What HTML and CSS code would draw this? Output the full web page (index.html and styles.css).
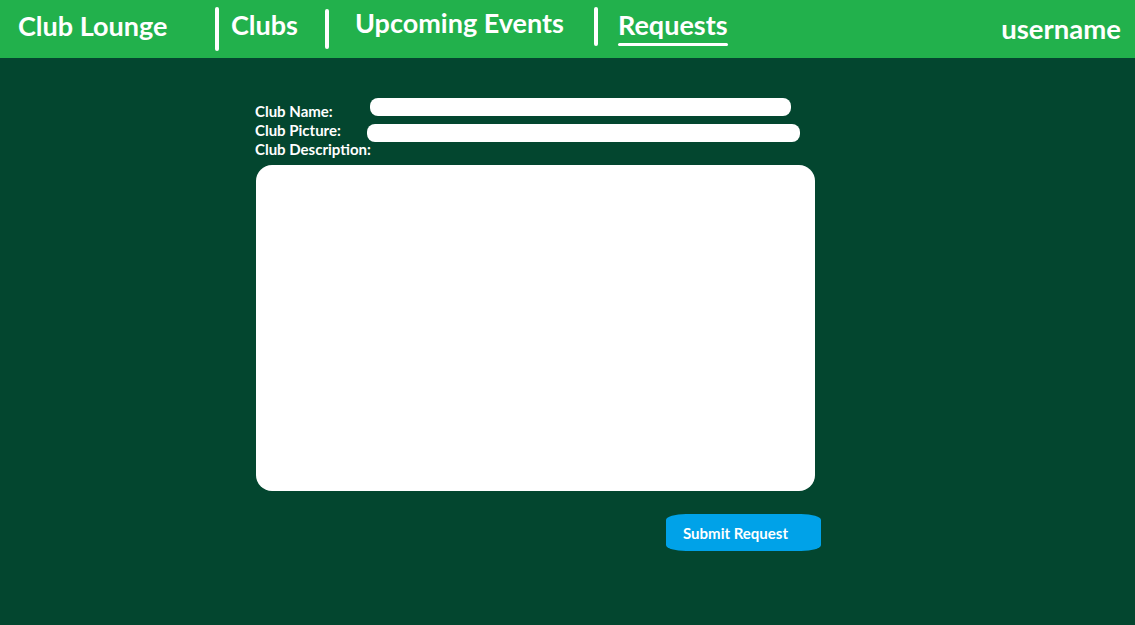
FILE: index.html
```html
<!DOCTYPE html>
<html lang="en">
<head>
<meta charset="utf-8">
<title>Club Lounge - Requests</title>
<link rel="stylesheet" href="styles.css">
</head>
<body>
<header class="nav">
  <div class="brand">Club Lounge</div>
  <span class="sep sep-1"></span>
  <a class="nav-link link-clubs">Clubs</a>
  <span class="sep sep-2"></span>
  <a class="nav-link link-events">Upcoming Events</a>
  <span class="sep sep-3"></span>
  <a class="nav-link link-requests active">Requests</a>
  <div class="user">username</div>
</header>
<main class="main">
  <form class="form">
    <div class="row">
      <label class="label">Club Name:</label>
      <span class="field field-name"></span>
    </div>
    <div class="row">
      <label class="label">Club Picture:</label>
      <span class="field field-pic"></span>
    </div>
    <div class="row">
      <label class="label">Club Description:</label>
    </div>
    <div class="textarea"></div>
    <div class="actions">
      <button type="button" class="submit">Submit Request</button>
    </div>
  </form>
</main>
</body>
</html>
```
FILE: styles.css
```css
* { box-sizing: border-box; }
html, body { margin: 0; padding: 0; }
body {
  width: 1135px;
  height: 625px;
  background: #03462f;
  font-family: Lato, "Open Sans", sans-serif;
  font-weight: 700;
  color: #fff;
  overflow: hidden;
}
.nav {
  height: 58px;
  background: #22b14c;
  display: flex;
  align-items: flex-start;
}
.brand,
.nav-link,
.user {
  font-size: 27px;
  line-height: 27px;
  color: #fff;
  white-space: nowrap;
}
.brand {
  margin: 12px 0 0 18px;
  width: 197px;
}
.sep {
  width: 4px;
  background: #fff;
  border-radius: 2px;
}
.sep-1 { height: 44px; margin-top: 7px; }
.sep-2 { height: 40px; margin-top: 9px; }
.sep-3 { height: 39px; margin-top: 7px; }
.link-clubs { margin: 11px 0 0 12px; width: 94px; }
.link-events { margin: 9px 0 0 26px; width: 239px; }
.link-requests {
  margin: 11px 0 0 20px;
  position: relative;
}
.link-requests::after {
  content: "";
  position: absolute;
  left: 0;
  right: 0;
  top: 32px;
  height: 3px;
  background: #fff;
  border-radius: 2px;
}
.user {
  margin: 15px 14px 0 auto;
  font-size: 27.5px;
}
.main {
  padding: 44px 0 0 255px;
}
.form {
  width: 566px;
  display: flex;
  flex-direction: column;
}
.row {
  display: flex;
  align-items: flex-start;
  height: 19px;
}
.label {
  font-size: 15px;
  line-height: 19px;
  width: 112px;
  flex: none;
  white-space: nowrap;
}
.field {
  display: block;
  background: #fff;
  border-radius: 8px;
  height: 18px;
}
.field-name {
  margin: -4px 0 0 3px;
  width: 421px;
}
.field-pic {
  margin: 3px 0 0 0;
  width: 433px;
}
.textarea {
  margin: 6px 0 0 1px;
  width: 559px;
  height: 326px;
  background: #fff;
  border-radius: 16px;
}
.actions {
  display: flex;
  justify-content: flex-end;
  margin-top: 23px;
}
.submit {
  width: 155px;
  height: 37px;
  border: 0;
  background: #00a2e8;
  color: #fff;
  font-family: Lato, "Open Sans", sans-serif;
  font-weight: 700;
  font-size: 15px;
  border-radius: 20px / 6px;
  text-align: left;
  padding: 0 0 0 17px;
}
```
